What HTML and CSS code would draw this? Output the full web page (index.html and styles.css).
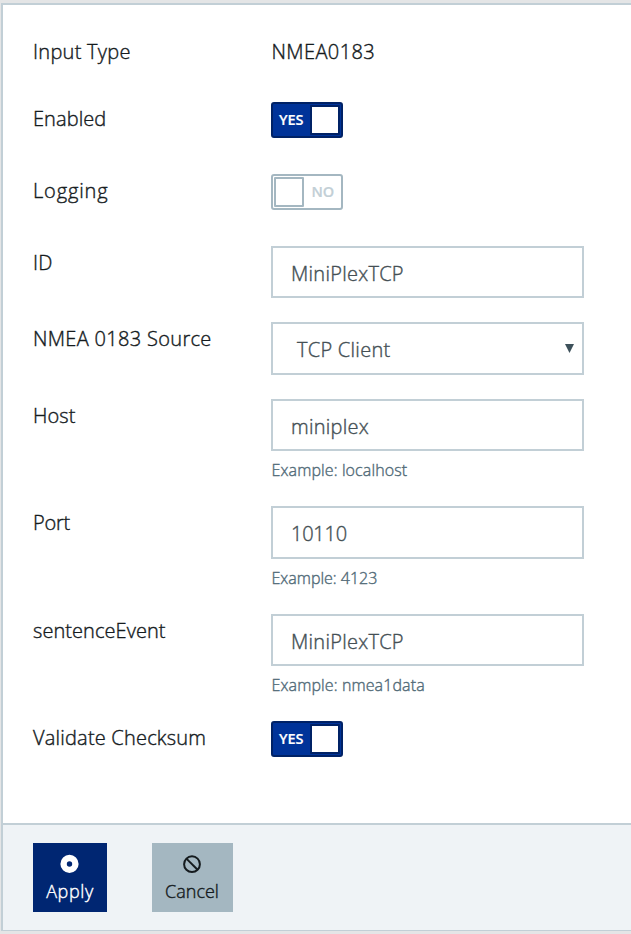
FILE: index.html
```html
<!DOCTYPE html>
<html lang="en">
<head>
<meta charset="utf-8">
<title>Input settings</title>
<link rel="stylesheet" href="styles.css">
</head>
<body>
<form class="card">
  <div class="card-body">
    <div class="row row-static"><span class="label"><span class="t-input">Input Type</span></span><span class="value">NMEA0183</span></div>
    <div class="row row-toggle"><span class="label"><span class="t-enabled">Enabled</span></span><span class="switch on"><span class="state">YES</span><span class="knob"></span></span></div>
    <div class="row row-toggle"><span class="label"><span class="t-logging">Logging</span></span><span class="switch off"><span class="knob"></span><span class="state">NO</span></span></div>
    <div class="row row-id"><span class="label"><span class="t-id">ID</span></span><div class="field"><span class="t-mini">MiniPlexTCP</span></div></div>
    <div class="row row-select"><span class="label"><span class="t-source">NMEA 0183 Source</span></span><div class="field select"><span class="t-client">TCP Client</span><svg class="arrow" width="9" height="9" viewBox="0 0 9 9"><path d="M0 0h9L4.5 9z"/></svg></div></div>
    <div class="row row-host"><span class="label"><span class="t-host">Host</span></span><div><div class="field"><span class="t-miniplex">miniplex</span></div><div class="hint"><span class="t-h1">Example: localhost</span></div></div></div>
    <div class="row row-port"><span class="label"><span class="t-port">Port</span></span><div><div class="field tall"><span class="t-num">10110</span></div><div class="hint"><span class="t-h2">Example: 4123</span></div></div></div>
    <div class="row row-event"><span class="label"><span class="t-event">sentenceEvent</span></span><div><div class="field"><span class="t-mini">MiniPlexTCP</span></div><div class="hint"><span class="t-h3">Example: nmea1data</span></div></div></div>
    <div class="row row-toggle"><span class="label"><span class="t-valid">Validate Checksum</span></span><span class="switch on"><span class="state">YES</span><span class="knob"></span></span></div>
  </div>
  <div class="card-footer">
    <button type="button" class="btn apply"><svg width="20" height="20" viewBox="0 0 20 20"><path fill="#fff" fill-rule="evenodd" d="M9.5 .8a9.1 9.1 0 1 0 0 18.2a9.1 9.1 0 1 0 0-18.2zM9.5 7.3a2.7 2.7 0 1 1 0 5.4a2.7 2.7 0 1 1 0-5.4z"/></svg><span class="t-apply">Apply</span></button>
    <button type="button" class="btn cancel"><svg width="20" height="20" viewBox="0 0 20 20"><g fill="none" stroke="#151b1e" stroke-width="2"><circle cx="10" cy="10.2" r="7.9"/><path d="M4.4 4.6l11.2 11.2"/></g></svg><span class="t-cancel">Cancel</span></button>
  </div>
</form>
</body>
</html>
```
FILE: styles.css
```css
* { box-sizing: border-box; }
body {
  margin: 0;
  padding: 3px 0 3px 1px;
  height: 934px;
  overflow: hidden;
  background: #e4e5e6;
  font-family: "Open Sans", "Noto Sans", sans-serif;
  font-size: 20px;
  font-weight: 300;
  letter-spacing: .27px;
  -webkit-text-stroke: .4px currentColor;
  color: #151b1e;
}
.card {
  height: 928px;
  border: 2px solid #c2cfd6;
  border-right: 0;
  border-bottom-width: 1px;
  background: #fff;
  display: flex;
  flex-direction: column;
}
.card-body { flex: 1; padding: 30px 0 0 30px; }
.row { display: grid; grid-template-columns: 238px 313px; align-items: start; height: 72px; }
.row-static { height: 67px; }
.row-id { height: 76px; }
.row-select { height: 77px; }
.row-host, .row-event { height: 107px; }
.row-port { height: 108px; }
.label, .value { line-height: 34px; white-space: nowrap; }
.value { letter-spacing: .4px; padding-left: .5px; }
.t-enabled { letter-spacing: .08px; }
.t-logging { letter-spacing: .85px; }
.t-source { letter-spacing: .32px; }
.t-host { letter-spacing: .1px; }
.t-port { letter-spacing: -.2px; }
.t-num { letter-spacing: -.25px; }
.t-event { letter-spacing: .06px; }
.t-valid { letter-spacing: .2px; }
.t-h2 { letter-spacing: 0; }
.field {
  display: flex;
  align-items: center;
  height: 52px;
  padding: 2px 8px 0 18px;
  border: 2px solid #c2cfd6;
  color: #455055;
}
.tall { height: 53px; }
.select { height: 53px; padding-left: 24px; justify-content: space-between; }
.arrow { fill: #3e515b; margin-top: -3px; }
.hint { margin-top: 7px; padding-left: .5px; font-size: 16px; line-height: 24px; letter-spacing: .12px; color: #536c79; white-space: nowrap; }
.switch {
  display: flex;
  align-items: center;
  justify-content: space-between;
  width: 72px;
  height: 36px;
  border: 2px solid #a4b7c1;
  border-radius: 3px;
  font-size: 14.5px;
  font-weight: 600;
  letter-spacing: -.1px;
  -webkit-text-stroke: .2px currentColor;
}
.state { margin-top: -2px; }
.switch.on { background: #003399; border-color: #002266; color: #fff; padding: 0 1px 0 6px; }
.knob { width: 30px; height: 30px; background: #fff; border: 2px solid #a4b7c1; border-radius: 1px; }
.on .knob { border-color: #002266; }
.off { color: #c2cfd6; padding: 0 7px 0 1px; }
.card-footer {
  height: 107px;
  border-top: 2px solid #c2cfd6;
  background: #eff3f6;
  padding: 18px 0 0 30px;
  display: flex;
  gap: 45px;
}
.btn {
  display: flex;
  flex-direction: column;
  align-items: center;
  height: 69px;
  padding: 11px 0 0;
  border: 0;
  font: inherit;
  font-size: 18px;
}
.btn span { line-height: 26px; margin-top: 4px; }
.t-apply { letter-spacing: .6px; }
.t-cancel { letter-spacing: 0; }
.apply { width: 74px; background: #002672; color: #fff; }
.cancel { width: 81px; padding-right: 1px; background: #a4b7c1; color: #151b1e; }
```
